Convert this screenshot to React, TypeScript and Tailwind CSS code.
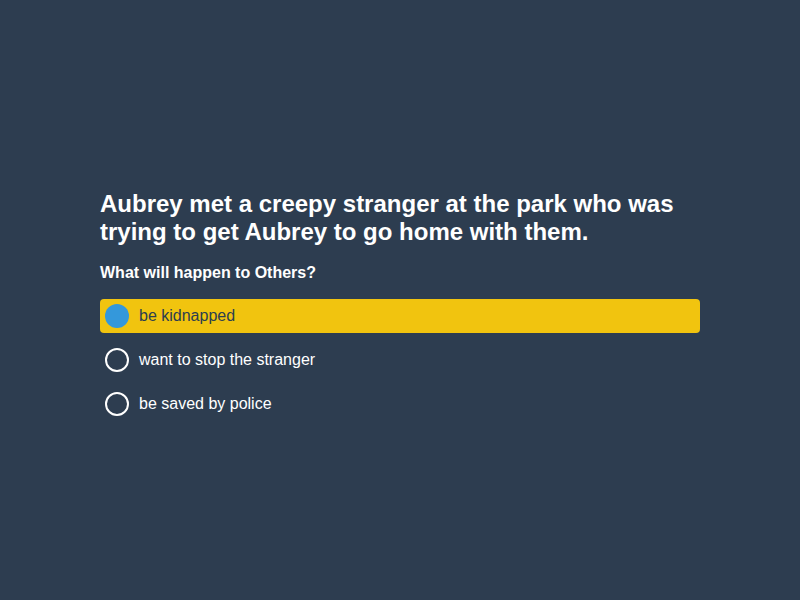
import React, { useState } from 'react';

const options = ['be kidnapped', 'want to stop the stranger', 'be saved by police'];

const App: React.FC = () => {
  const [selected, setSelected] = useState(0);

  return (
    <div className="w-[800px] h-[600px] bg-[#2d3d50] flex items-center justify-center font-['Liberation_Sans',Arial,sans-serif]">
      <div className="w-[600px] pt-[10px]">
        <h1 className="text-[24px] leading-[28px] font-bold text-white">
          Aubrey met a creepy stranger at the park who was trying to get Aubrey to go home with them.
        </h1>
        <p className="mt-[15px] text-[16px] leading-[24px] font-bold text-white">What will happen to Others?</p>
        <div className="mt-[14px] flex flex-col gap-[10px]">
          {options.map((opt, i) => {
            const active = i === selected;
            return (
              <button
                key={opt}
                onClick={() => setSelected(i)}
                className={`flex items-center gap-[10px] h-[34px] px-[5px] rounded text-left text-[16px] ${
                  active ? 'bg-[#f1c40f] text-[#2c3e50]' : 'text-white'
                }`}
              >
                {active ? (
                  <span className="w-6 h-6 rounded-full bg-[#3498db]" />
                ) : (
                  <span className="w-6 h-6 rounded-full border-2 border-white" />
                )}
                <span>{opt}</span>
              </button>
            );
          })}
        </div>
      </div>
    </div>
  );
};

export default App;
